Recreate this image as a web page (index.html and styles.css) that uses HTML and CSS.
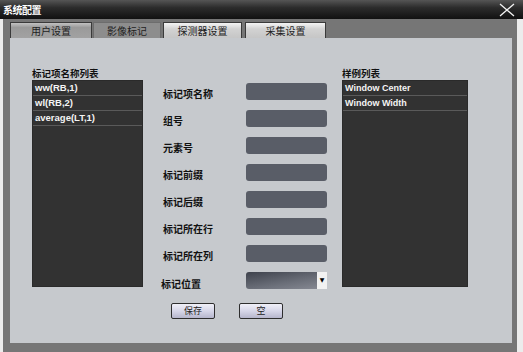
FILE: index.html
```html
<!DOCTYPE html>
<html>
<head>
<title>系统配置</title>
<meta charset="utf-8">
<link rel="stylesheet" href="styles.css">
</head>
<body>
  <div class="window">
    <div class="titlebar">
      <span class="title">系统配置</span>
      <svg class="close" width="16" height="14" viewBox="0 0 16 14">
        <path d="M1 1 L15 13 M15 1 L1 13" stroke="#f2f2f2" stroke-width="1.3" fill="none"/>
      </svg>
    </div>
    <div class="frame">
      <div class="tabs">
        <div class="tab tab-user">用户设置</div>
        <div class="tab tab-active">影像标记</div>
        <div class="tab tab-light tab-det">探测器设置</div>
        <div class="tab tab-light tab-acq">采集设置</div>
      </div>
      <div class="panel">
        <div class="col col-left">
          <div class="caption">标记项名称列表</div>
          <div class="listbox listbox-left">
            <div class="row">ww(RB,1)</div>
            <div class="row">wl(RB,2)</div>
            <div class="row">average(LT,1)</div>
          </div>
        </div>
        <div class="col col-mid">
          <div class="form">
            <label>标记项名称</label><div class="field"></div>
            <label>组号</label><div class="field"></div>
            <label>元素号</label><div class="field"></div>
            <label>标记前缀</label><div class="field"></div>
            <label>标记后缀</label><div class="field"></div>
            <label>标记所在行</label><div class="field"></div>
            <label>标记所在列</label><div class="field"></div>
            <label class="pos-label">标记位置</label>
            <div class="select"><div class="select-box"></div><div class="arrow">▼</div></div>
          </div>
          <div class="buttons">
            <button class="btn">保存</button>
            <button class="btn">空</button>
          </div>
        </div>
        <div class="col col-right">
          <div class="caption">样例列表</div>
          <div class="listbox listbox-right">
            <div class="row">Window Center</div>
            <div class="row">Window Width</div>
          </div>
        </div>
      </div>
    </div>
  </div>
</body>
</html>
```

FILE: styles.css
```css
html, body {
  margin: 0;
  padding: 0;
  width: 523px;
  height: 352px;
  overflow: hidden;
  background-color: #ececec;
  font-family: "Noto Sans CJK SC", "Liberation Sans", sans-serif;
}
.window {
  display: flex;
  flex-direction: column;
  width: 523px;
  height: 352px;
}
.titlebar {
  height: 19px;
  display: flex;
  align-items: center;
  justify-content: space-between;
  padding: 0 8px 0 3px;
  background: linear-gradient(#555 0%, #2c2c2c 40%, #111 100%);
}
.title {
  color: #fff;
  font-weight: bold;
  font-size: 10px;
  line-height: 12px;
  letter-spacing: -0.5px;
}
.close {
  display: block;
}
.frame {
  flex: 1;
  margin: 0 6px 0 3px;
  padding: 3px 5px 9px 7px;
  background-color: #767676;
  display: flex;
  flex-direction: column;
}
.tabs {
  display: flex;
  height: 16px;
}
.tab {
  box-sizing: border-box;
  height: 16px;
  font-size: 10px;
  line-height: 15px;
  text-align: center;
  color: #1e1e1e;
  border: 1px solid #3a3a3a;
  border-bottom: none;
}
.tab-user {
  width: 82px;
  background: linear-gradient(#c2c2c2, #9a9a9a 30%, #a2a2a2);
}
.tab-active {
  width: 68px;
  margin-left: 1px;
  background-color: #8d8d8d;
  border-color: #6d6d6d;
}
.tab-light {
  background: linear-gradient(#f4f4f4, #d2d2d2 40%, #c6c6c6);
}
.tab-det {
  width: 79px;
  margin-left: 2px;
}
.tab-acq {
  width: 81px;
  margin-left: 3px;
}
.panel {
  flex: 1;
  background-color: #c6c9cd;
  display: flex;
  padding: 29px 0 0 22px;
}
.col {
  display: flex;
  flex-direction: column;
}
.caption {
  font-size: 9.5px;
  font-weight: bold;
  line-height: 13px;
  color: #111;
}
.listbox {
  height: 207px;
  background-color: #323232;
  border: 1px solid #2a2a2a;
  box-sizing: border-box;
}
.listbox-left {
  width: 111px;
}
.listbox-left .row {
  font-size: 9.5px;
}
.listbox-right {
  width: 126px;
}
.row {
  height: 15px;
  line-height: 14px;
  padding-left: 2px;
  border-bottom: 1px solid #5a5a5a;
  box-sizing: border-box;
  color: #f4f4f4;
  font-family: "Liberation Sans", Arial, sans-serif;
  font-weight: bold;
  font-size: 9px;
}
.col-mid {
  margin-left: 18px;
  width: 166px;
  padding-top: 16px;
}
.form {
  display: grid;
  grid-template-columns: 85px 81px;
  grid-auto-rows: 17px;
  row-gap: 10px;
  align-items: center;
}
.form label {
  font-size: 10px;
  font-weight: bold;
  color: #111;
  padding-left: 2px;
  padding-top: 3px;
}
.form label.pos-label {
  padding-left: 0;
  padding-top: 6px;
}
.field {
  height: 17px;
  background-color: #595d67;
  border-radius: 3px;
}
.select {
  height: 17px;
  display: flex;
}
.select-box {
  flex: 1;
  border-radius: 3px 0 0 3px;
  background: linear-gradient(170deg, #3e424c, #6a6e78 60%, #858892);
}
.arrow {
  width: 10px;
  background-color: #f2f2f2;
  font-family: "DejaVu Sans", sans-serif;
  font-size: 6px;
  line-height: 15px;
  text-align: center;
  color: #000;
}
.buttons {
  display: flex;
  gap: 24px;
  margin-top: 14px;
  padding-left: 10px;
}
.btn {
  width: 44px;
  height: 16px;
  padding: 0;
  font-family: "Noto Sans CJK SC", sans-serif;
  font-size: 9px;
  line-height: 14px;
  color: #222;
  border: 1px solid #2e2e2e;
  border-radius: 2px;
  background: linear-gradient(#f0f0f8, #d6d6e8 50%, #b6b6cc);
}
.col-right {
  margin-left: 15px;
}
```
